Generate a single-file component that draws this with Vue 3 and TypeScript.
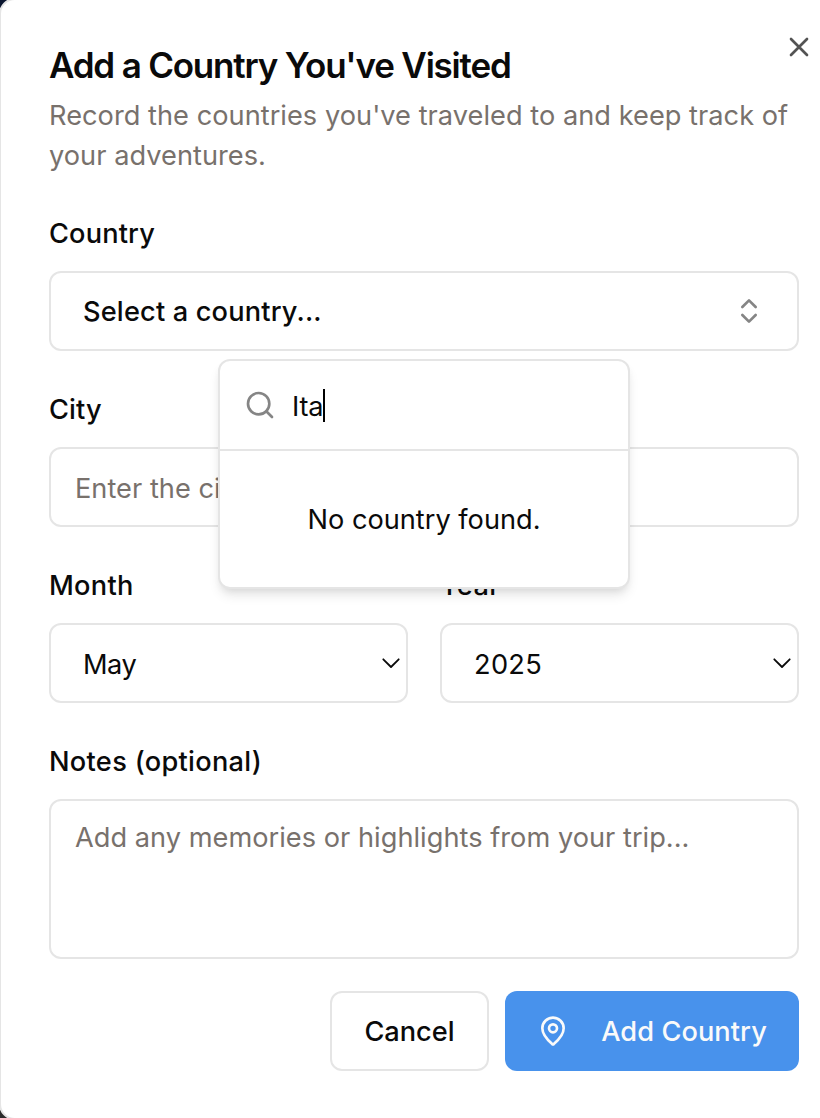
<script setup lang="ts">
import { ref } from 'vue'

const search = ref<string>('Ita')
const month = ref<string>('May')
const year = ref<string>('2025')
</script>

<template>
  <div class="backdrop">
    <section class="dialog" role="dialog">
      <button class="close" type="button" aria-label="Close">
        <svg width="32" height="32" viewBox="0 0 24 24"><path d="M18 6 6 18M6 6l12 12" /></svg>
      </button>

      <header class="header">
        <h2 class="title">Add a Country You've Visited</h2>
        <p class="description">Record the countries you've traveled to and keep track of<br />your adventures.</p>
      </header>

      <div class="form">
        <div class="field">
          <span class="label tight">Country</span>
          <div class="control combo">
            <span class="combo-text">Select a country...</span>
            <svg class="updown" width="32" height="32" viewBox="0 0 24 24">
              <path d="m7 15 5 5 5-5M7 9l5-5 5 5" />
            </svg>
          </div>
          <div class="popover">
            <div class="search">
              <svg width="32" height="32" viewBox="0 0 24 24">
                <circle cx="11" cy="11" r="8" />
                <path d="m21 21-4.3-4.3" />
              </svg>
              <span class="query">{{ search }}</span>
              <span class="caret"></span>
            </div>
            <div class="empty"><span>No country found.</span></div>
          </div>
        </div>

        <div class="field">
          <span class="label tight">City</span>
          <div class="control input"><span class="placeholder">Enter the city name</span></div>
        </div>

        <div class="row">
          <div class="field">
            <span class="label">Month</span>
            <div class="control select">
              <span class="month">{{ month }}</span>
              <svg width="20" height="12" viewBox="0 0 20 12"><path d="m2.3 2.3 7.7 7.7 7.7-7.7" /></svg>
            </div>
          </div>
          <div class="field">
            <span class="label">Year</span>
            <div class="control select">
              <span class="year">{{ year }}</span>
              <svg width="20" height="12" viewBox="0 0 20 12"><path d="m2.3 2.3 7.7 7.7 7.7-7.7" /></svg>
            </div>
          </div>
        </div>

        <div class="field">
          <span class="label">Notes (optional)</span>
          <div class="control textarea">
            <span class="placeholder">Add any memories or highlights from your trip...</span>
          </div>
        </div>
      </div>

      <footer class="footer">
        <button class="btn outline" type="button"><span>Cancel</span></button>
        <button class="btn primary" type="button">
          <svg width="32" height="32" viewBox="0 0 24 24">
            <path d="M20 10c0 4.993-5.539 10.193-7.399 11.799a1 1 0 0 1-1.202 0C9.539 20.193 4 14.993 4 10a8 8 0 0 1 16 0" />
            <circle cx="12" cy="10" r="3" />
          </svg>
          <span>Add Country</span>
        </button>
      </footer>
    </section>
  </div>
</template>

<style>
html,
body {
  margin: 0;
  overflow: hidden;
}
</style>

<style scoped>
* {
  box-sizing: border-box;
}
.backdrop {
  height: 1118px;
  overflow: hidden;
  background: linear-gradient(#0b1630 0 50%, #2b2b2b 50%);
  font-family: Inter, 'Liberation Sans', sans-serif;
  font-size: 27.2px;
  color: #0a0a0a;
}
.dialog {
  position: relative;
  width: 860px;
  height: 1122px;
  margin: -2px 0 0 -1px;
  padding: 47px 60px 0 48px;
  border: 2px solid #e5e5e5;
  border-radius: 16px;
  background: #fff;
}
svg {
  display: block;
  flex: none;
  fill: none;
  stroke: currentColor;
  stroke-width: 2;
  stroke-linecap: round;
  stroke-linejoin: round;
}
button {
  font: inherit;
  color: inherit;
  cursor: pointer;
}
.close {
  position: absolute;
  top: 31px;
  left: 782px;
  padding: 0;
  border: 0;
  background: none;
  color: #535353;
}
.header {
  height: 160px;
}
.title {
  margin: 0;
  font-size: 35px;
  line-height: 36px;
  font-weight: 600;
  letter-spacing: -1.2px;
}
.description {
  margin: 13px 0 0;
  line-height: 40px;
  letter-spacing: 0.03px;
  color: #78716c;
  white-space: nowrap;
}
.form {
  display: flex;
  flex-direction: column;
  gap: 32px;
  width: 750px;
}
.field {
  position: relative;
  display: flex;
  flex-direction: column;
  gap: 18px;
  min-width: 0;
  padding-top: 7px;
}
.label {
  height: 39px;
  line-height: 39px;
  font-weight: 500;
  letter-spacing: 0.3px;
}
.tight {
  letter-spacing: 0.15px;
}
.control {
  display: flex;
  align-items: center;
  height: 80px;
  border: 2px solid #e5e5e5;
  border-radius: 12px;
  background: #fff;
  white-space: nowrap;
}
.combo {
  justify-content: space-between;
  padding: 0 32px;
  font-weight: 500;
}
.combo-text {
  letter-spacing: 0.17px;
}
.updown {
  color: #858585;
}
.input {
  padding: 3px 24px 0;
}
.placeholder {
  color: #78716c;
  letter-spacing: 0.02px;
}
.row {
  display: grid;
  grid-template-columns: 359px 359px;
  gap: 32px;
}
.select {
  justify-content: space-between;
  padding: 2px 5px 0 32px;
}
.select svg {
  margin-top: -2px;
  stroke-width: 1.8;
}
.month {
  letter-spacing: -0.5px;
}
.year {
  letter-spacing: 0.3px;
}
.textarea {
  align-items: flex-start;
  height: 160px;
  padding: 17px 24px;
  line-height: 40px;
}
.popover {
  position: absolute;
  z-index: 2;
  top: 152px;
  left: 169px;
  width: 412px;
  height: 230px;
  border: 2px solid #e5e5e5;
  border-radius: 12px;
  background: #fff;
  box-shadow: 0 8px 12px -2px rgba(0, 0, 0, 0.1), 0 4px 8px -4px rgba(0, 0, 0, 0.1);
}
.search {
  display: flex;
  align-items: center;
  height: 90px;
  padding: 0 24px;
  border-bottom: 2px solid #e5e5e5;
}
.search svg {
  margin-right: 16px;
  color: #858585;
}
.query {
  padding-top: 2px;
  letter-spacing: -0.3px;
}
.caret {
  width: 2px;
  height: 33px;
  background: #000;
}
.empty {
  display: flex;
  justify-content: center;
  align-items: center;
  height: 136px;
}
.footer {
  display: flex;
  justify-content: flex-end;
  gap: 16px;
  width: 750px;
  margin-top: 32px;
}
.btn {
  display: flex;
  align-items: center;
  justify-content: center;
  height: 80px;
  padding: 0;
  border-radius: 12px;
  font-weight: 500;
  white-space: nowrap;
}
.outline {
  width: 159px;
  border: 2px solid #e5e5e5;
  background: #fff;
}
.primary {
  width: 294px;
  gap: 32px;
  border: 0;
  background: #4892ec;
  color: #fafafa;
  letter-spacing: 0.08px;
}
</style>
